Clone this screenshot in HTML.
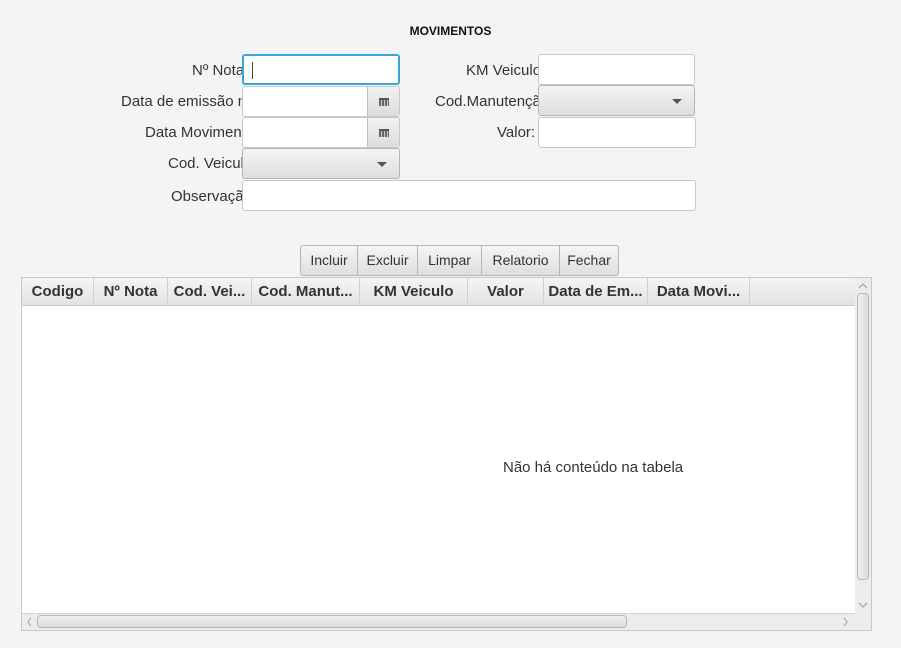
<!DOCTYPE html>
<html><head><meta charset="utf-8"><style>
body{margin:0;width:901px;height:648px;background:#f4f4f4;font-family:"Liberation Sans",sans-serif;font-size:15px;color:#333;position:relative;overflow:hidden}
.a{position:absolute}
.lbl{position:absolute;white-space:nowrap;overflow:hidden;line-height:30px;margin-top:2px}
.in{position:absolute;background:#fff;border:1px solid #c8c8c8;border-radius:3px;box-sizing:border-box}
.btn{position:absolute;background:linear-gradient(#f4f4f4,#dedede);border:1px solid #b5b5b5;border-radius:3px;box-sizing:border-box}
.cal{position:absolute;right:0;top:0;bottom:0;width:31px;background:linear-gradient(#f2f2f2,#dcdcdc);border-left:1px solid #c0c0c0;border-radius:0 3px 3px 0}
.cal:after{content:"";position:absolute;left:11px;top:11px;width:10px;height:8px;background:repeating-linear-gradient(90deg,#666 0 2px,#ccc 2px 3px);border-top:2px solid #555;box-sizing:border-box}
.arr{position:absolute;right:12px;top:13px;border:5px solid transparent;border-top:5px solid #555;border-bottom:0}
.tb{position:absolute;top:245px;height:31px;line-height:29px;text-align:center;background:linear-gradient(#f6f6f6,#dedede);border:1px solid #b5b5b5;box-sizing:border-box;font-size:14px}
.th{position:absolute;top:278px;height:28px;line-height:28px;font-weight:bold;text-align:center;border-right:1px solid #cfcfcf;box-sizing:border-box;background:linear-gradient(#f4f4f4,#e2e2e2);border-bottom:1px solid #c8c8c8;white-space:nowrap;overflow:hidden}
</style></head><body>
<div class="a" style="left:0;width:901px;top:24px;text-align:center;font-weight:bold;font-size:12px;color:#111">MOVIMENTOS</div>

<div class="lbl" style="left:192px;width:51px;top:54px">Nº Nota</div>
<div class="lbl" style="left:121px;width:122px;top:85px">Data de emissão nota</div>
<div class="lbl" style="left:145px;width:98px;top:116px">Data Movimento</div>
<div class="lbl" style="left:168px;width:75px;top:147px">Cod. Veiculo</div>
<div class="lbl" style="left:171px;width:72px;top:180px">Observação</div>

<div class="in" style="left:242px;top:54px;width:158px;height:31px;border:2px solid #3ca4d8"><div class="a" style="left:8px;top:6px;width:1px;height:17px;background:#444"></div></div>
<div class="in" style="left:242px;top:86px;width:158px;height:31px"><div class="cal"></div></div>
<div class="in" style="left:242px;top:117px;width:158px;height:31px"><div class="cal"></div></div>
<div class="btn" style="left:242px;top:148px;width:158px;height:31px"><div class="arr"></div></div>
<div class="in" style="left:242px;top:180px;width:454px;height:31px"></div>

<div class="lbl" style="left:466px;width:72px;top:54px">KM Veiculo</div>
<div class="lbl" style="left:435px;width:103px;top:85px">Cod.Manutenção</div>
<div class="lbl" style="left:497px;width:41px;top:116px">Valor:</div>
<div class="in" style="left:538px;top:54px;width:157px;height:31px"></div>
<div class="btn" style="left:538px;top:85px;width:157px;height:31px"><div class="arr"></div></div>
<div class="in" style="left:538px;top:117px;width:158px;height:31px"></div>

<div class="tb" style="left:300px;width:58px;border-radius:3px 0 0 3px">Incluir</div>
<div class="tb" style="left:357px;width:61px">Excluir</div>
<div class="tb" style="left:417px;width:65px">Limpar</div>
<div class="tb" style="left:481px;width:79px">Relatorio</div>
<div class="tb" style="left:559px;width:60px;border-radius:0 3px 3px 0">Fechar</div>

<div class="a" style="left:21px;top:277px;width:851px;height:354px;background:#fff;border:1px solid #c8c8c8;box-sizing:border-box"></div>
<div class="th" style="left:22px;width:72px">Codigo</div>
<div class="th" style="left:94px;width:74px">Nº Nota</div>
<div class="th" style="left:168px;width:84px">Cod. Vei...</div>
<div class="th" style="left:252px;width:108px">Cod. Manut...</div>
<div class="th" style="left:360px;width:108px">KM Veiculo</div>
<div class="th" style="left:468px;width:76px">Valor</div>
<div class="th" style="left:544px;width:104px">Data de Em...</div>
<div class="th" style="left:648px;width:102px">Data Movi...</div>
<div class="th" style="left:750px;width:105px;border-right:none"></div>
<div class="a" style="left:503px;width:180px;top:459px;text-align:center;line-height:17px;white-space:nowrap">Não há conteúdo na tabela</div>

<div class="a" style="left:855px;top:278px;width:16px;height:335px;background:#ececec"></div>
<div class="a" style="left:857px;top:293px;width:12px;height:287px;background:linear-gradient(90deg,#f0f0f0,#dcdcdc);border:1px solid #b8b8b8;border-radius:4px;box-sizing:border-box"></div>
<svg class="a" style="left:855px;top:280px" width="16" height="12"><path d="M4 8 L8 4 L12 8" fill="none" stroke="#999" stroke-width="1"/></svg>
<svg class="a" style="left:855px;top:599px" width="16" height="12"><path d="M4 4 L8 8 L12 4" fill="none" stroke="#999" stroke-width="1"/></svg>
<div class="a" style="left:22px;top:613px;width:833px;height:17px;background:#ececec;border-top:1px solid #d4d4d4;box-sizing:border-box"></div>
<div class="a" style="left:37px;top:615px;width:590px;height:13px;background:linear-gradient(#f0f0f0,#dcdcdc);border:1px solid #b8b8b8;border-radius:4px;box-sizing:border-box"></div>
<svg class="a" style="left:23px;top:614px" width="12" height="16"><path d="M8 4 L5 8 L8 12" fill="none" stroke="#999" stroke-width="1"/></svg>
<svg class="a" style="left:840px;top:614px" width="12" height="16"><path d="M4 4 L7 8 L4 12" fill="none" stroke="#999" stroke-width="1"/></svg>
<div class="a" style="left:855px;top:613px;width:16px;height:17px;background:#ececec"></div>
</body></html>
